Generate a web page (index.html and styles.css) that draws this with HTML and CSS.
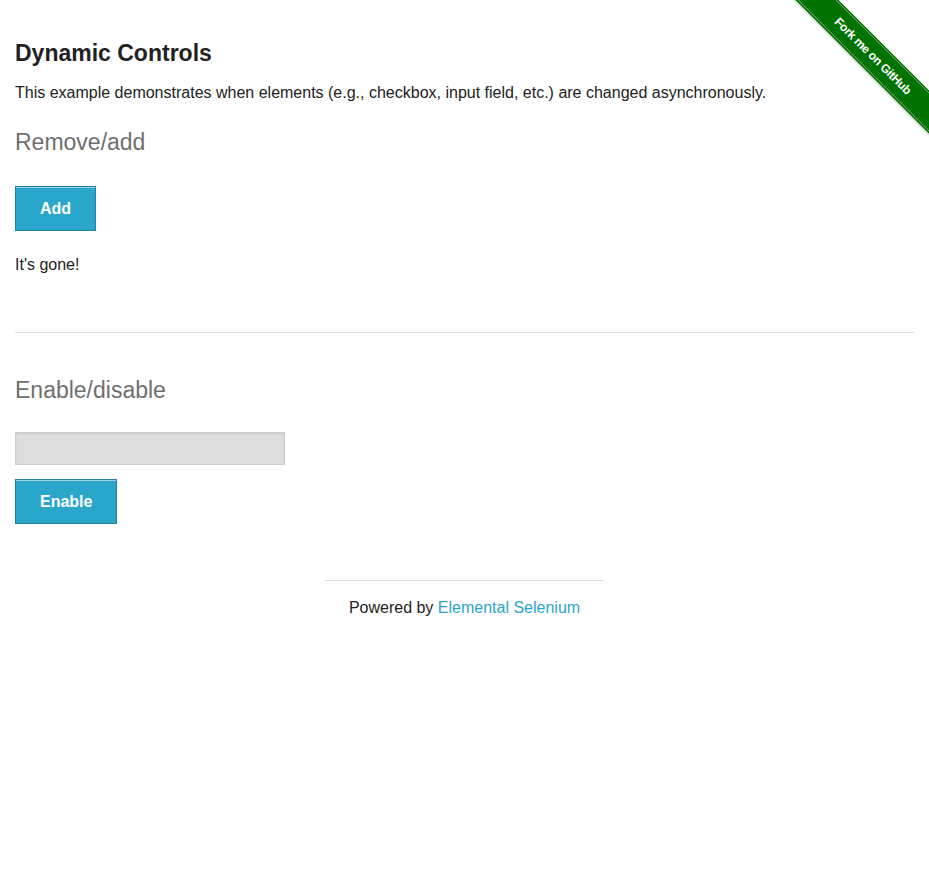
FILE: index.html
```html
<!DOCTYPE html>
<html>
<head>
<meta charset="utf-8">
<title>The Internet</title>
<link rel="stylesheet" href="styles.css">
</head>
<body>
<a class="ribbon" href="#"><span class="ribbon-band">Fork me on GitHub</span></a>
<div class="page">
  <h3 class="title">Dynamic Controls</h3>
  <p class="intro">This example demonstrates when elements (e.g., checkbox, input field, etc.) are changed asynchronously.</p>
  <h4 class="section-title">Remove/add</h4>
  <button class="btn btn-add" type="button">Add</button>
  <p class="message">It's gone!</p>
  <hr class="divider">
  <h4 class="section-title section-second">Enable/disable</h4>
  <input class="text-input" type="text" disabled>
  <button class="btn btn-enable" type="button">Enable</button>
</div>
<div class="footer">
  <div class="footer-inner">Powered by <a class="footer-link" href="#">Elemental Selenium</a></div>
</div>
</body>
</html>
```
FILE: styles.css
```css
html, body {
  margin: 0;
  padding: 0;
  background: #fff;
}
body {
  font-family: "Liberation Sans", Arial, sans-serif;
  color: #222;
  font-size: 16px;
}
.page {
  padding: 39px 15px 0 15px;
}
.title {
  margin: 0;
  font-size: 23px;
  line-height: 28px;
  font-weight: bold;
  color: #222;
}
.intro {
  margin: 14px 0 0 0;
  line-height: 24px;
}
.section-title {
  margin: 23px 0 0 0;
  font-size: 23px;
  line-height: 28px;
  font-weight: normal;
  color: #6f6f6f;
}
.section-second {
  margin-top: 43px;
}
.btn {
  display: block;
  font-family: "Liberation Sans", Arial, sans-serif;
  font-size: 16px;
  font-weight: bold;
  line-height: 18px;
  color: #fff;
  background: #2ba6cb;
  border: 1px solid #2284a1;
  box-shadow: inset 0 1px 0 rgba(255,255,255,0.5);
  padding: 13px 24px 12px 24px;
  margin: 0;
  cursor: pointer;
}
.btn-add {
  margin-top: 30px;
}
.message {
  margin: 22px 0 0 0;
  line-height: 24px;
}
.divider {
  margin: 55px 0 0 0;
  border: 0;
  border-top: 1px solid #ddd;
  height: 0;
}
.text-input {
  display: block;
  box-sizing: border-box;
  width: 270px;
  height: 33px;
  margin: 28px 0 0 0;
  background: #ddd;
  border: 1px solid #ccc;
  box-shadow: inset 0 1px 2px rgba(0,0,0,0.1);
  padding: 0 8px;
}
.btn-enable {
  margin-top: 14px;
}
.footer {
  padding-top: 56px;
}
.footer-inner {
  width: 279px;
  margin: 0 auto;
  border-top: 1px solid #ddd;
  padding-top: 15px;
  text-align: center;
  line-height: 24px;
  color: #222;
}
.footer-link {
  color: #2ba6cb;
  text-decoration: none;
}
.ribbon {
  position: absolute;
  top: 0;
  right: 0;
  width: 149px;
  height: 149px;
  overflow: hidden;
  text-decoration: none;
}
.ribbon-band {
  position: absolute;
  left: -17px;
  top: 41px;
  width: 220px;
  height: 30px;
  box-sizing: border-box;
  transform: rotate(45deg);
  background: #007200;
  border-top: 1px solid #007200;
  border-bottom: 1px solid #007200;
  box-shadow: inset 0 1px 0 rgba(255,255,255,0.45), inset 0 -1px 0 rgba(255,255,255,0.45), 0 1px 2px rgba(0,0,0,0.3);
  color: #fff;
  font-family: "Liberation Sans", Arial, sans-serif;
  font-weight: bold;
  font-size: 12px;
  line-height: 28px;
  text-align: center;
  letter-spacing: -0.3px;
}
```
